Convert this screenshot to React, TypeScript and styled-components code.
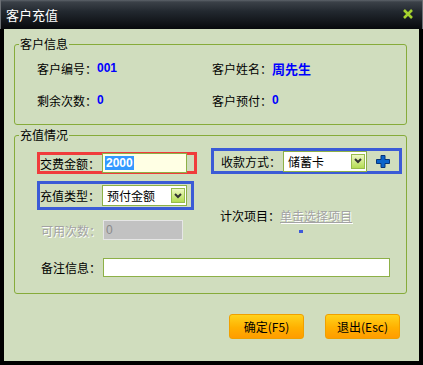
import styled, { createGlobalStyle } from "styled-components";

const GlobalStyle = createGlobalStyle`
  html, body {
    margin: 0;
    padding: 0;
    background: #000;
  }
  body {
    font-family: "Noto Sans CJK SC", "Noto Sans", sans-serif;
    font-size: 12px;
    color: #000;
  }
`;

const Window = styled.div`
  width: 423px;
  height: 365px;
  background: #000;
  display: flex;
  flex-direction: column;
`;

const TitleBar = styled.div`
  flex: none;
  height: 29px;
  box-sizing: border-box;
  display: flex;
  align-items: center;
  justify-content: space-between;
  padding: 0 9px 1px 5px;
  background: linear-gradient(#5d636a 0, #3b4148 2px, #22282f 40%, #07090c 100%);
  border-left: 1px solid #6b6f74;
  border-right: 1px solid #6b6f74;
  color: #fff;
  font-size: 13px;
`;

const Body = styled.div`
  flex: 1;
  margin: 0 4px 4px;
  padding: 8px 12px 0 10px;
  background: #d0ddbe;
  display: flex;
  flex-direction: column;
`;

const Group = styled.fieldset`
  margin: 0;
  padding: 0;
  min-width: 0;
  border: 1px solid #86ab3a;
  border-radius: 3px;
  & + & {
    margin-top: 3px;
  }
`;

const Legend = styled.legend`
  margin-left: 4px;
  padding: 0 1px;
  line-height: 14px;
  font-size: 12px;
`;

const InfoGrid = styled.div`
  display: grid;
  grid-template-columns: 175px 1fr;
  grid-auto-rows: 32px;
  align-items: center;
  padding: 1px 0 8px 22px;
`;

const InfoItem = styled.div`
  display: flex;
  align-items: center;
  white-space: nowrap;
`;

const Value = styled.span<{ $big?: boolean }>`
  color: #0000ff;
  font-weight: bold;
  font-family: ${(p) => (p.$big ? '"Noto Sans CJK SC", sans-serif' : '"Liberation Sans", sans-serif')};
  font-size: ${(p) => (p.$big ? 13 : 12)}px;
`;

const ChargeGrid = styled.div`
  display: grid;
  grid-template-columns: 174px 1fr;
  align-items: start;
  padding: 6px 0 0 22px;
`;

const Column = styled.div<{ $top?: number }>`
  display: flex;
  flex-direction: column;
  align-items: flex-start;
  padding-top: ${(p) => p.$top ?? 0}px;
`;

const Mark = styled.div<{ $color: string; $w: number; $h: number; $gap?: number; $pad?: number }>`
  box-sizing: border-box;
  display: flex;
  align-items: center;
  width: ${(p) => p.$w}px;
  height: ${(p) => p.$h}px;
  margin-top: ${(p) => p.$gap ?? 0}px;
  padding-left: ${(p) => p.$pad ?? 0}px;
  border: 3px solid ${(p) => p.$color};
`;

const Row = styled.div<{ $gap?: number; $pad?: number }>`
  display: flex;
  align-items: center;
  margin-top: ${(p) => p.$gap ?? 0}px;
  padding-left: ${(p) => p.$pad ?? 0}px;
`;

const Label = styled.span<{ $disabled?: boolean; $w?: number }>`
  flex: none;
  width: ${(p) => p.$w ?? 62}px;
  white-space: nowrap;
  color: ${(p) => (p.$disabled ? "#a3a3a3" : "#000")};
  text-shadow: ${(p) => (p.$disabled ? "1px 1px 0 #fff" : "none")};
`;

const Field = styled.div<{ $w: number; $h?: number; $bg?: string; $disabled?: boolean }>`
  flex: none;
  box-sizing: border-box;
  width: ${(p) => p.$w}px;
  height: ${(p) => p.$h ?? 20}px;
  display: flex;
  align-items: center;
  padding-left: 2px;
  border: 1px solid ${(p) => (p.$disabled ? "#e6e6e6" : "#8db047")};
  background: ${(p) => (p.$disabled ? "#c2c2c2" : p.$bg ?? "#fff")};
  color: ${(p) => (p.$disabled ? "#8a8a8a" : "#000")};
  font-family: "Liberation Sans", "Noto Sans CJK SC", sans-serif;
  white-space: nowrap;
`;

const Selected = styled.span`
  background: #3399ff;
  color: #fff;
  font-weight: bold;
  padding: 0 1px;
  line-height: 14px;
`;

const SelectText = styled.span`
  padding-left: 2px;
  font-family: "Noto Sans CJK SC", sans-serif;
`;

const DropButton = styled.span`
  margin-left: auto;
  margin-right: 1px;
  width: 14px;
  height: 15px;
  box-sizing: border-box;
  border: 1px solid #97bb4c;
  background: linear-gradient(#eef8c4, #b4dc52);
  display: flex;
  align-items: center;
  justify-content: center;
`;

const AddIcon = styled.svg`
  margin-left: 9px;
  flex: none;
`;

const Link = styled.span`
  color: #a3a3a3;
  text-decoration: underline;
  text-shadow: 1px 1px 0 #fff;
  white-space: nowrap;
`;

const Dot = styled.span`
  width: 4px;
  height: 3px;
  margin: 6px 0 0 88px;
  background: #3d59d9;
`;

const RemarkRow = styled(Row)`
  padding-bottom: 16px;
`;

const Buttons = styled.div`
  display: flex;
  justify-content: flex-end;
  gap: 21px;
  margin-top: 20px;
  padding-right: 7px;
`;

const Button = styled.button`
  width: 75px;
  height: 25px;
  padding: 0;
  border: 1px solid #f0a000;
  border-radius: 3px;
  background: linear-gradient(#ffd21c, #ffb000 55%, #ff9c00);
  font-family: "Noto Sans CJK SC", sans-serif;
  font-size: 12px;
  color: #000;
`;

const Chevron = () => (
  <svg width="8" height="6" viewBox="0 0 8 6">
    <path d="M1 1 L4 4 L7 1" fill="none" stroke="#333" strokeWidth="2" />
  </svg>
);

const Select = ({ w, text }: { w: number; text: string }) => (
  <Field $w={w} $h={21}>
    <SelectText>{text}</SelectText>
    <DropButton>
      <Chevron />
    </DropButton>
  </Field>
);

export default function App() {
  return (
    <>
      <GlobalStyle />
      <Window>
        <TitleBar>
          <span>客户充值</span>
          <svg width="10" height="10" viewBox="0 0 10 10">
            <path d="M1 1 L9 9 M9 1 L1 9" stroke="#a6d22e" strokeWidth="2.6" />
          </svg>
        </TitleBar>
        <Body>
          <Group>
            <Legend>客户信息</Legend>
            <InfoGrid>
              <InfoItem>
                客户编号：<Value>001</Value>
              </InfoItem>
              <InfoItem>
                客户姓名：<Value $big>周先生</Value>
              </InfoItem>
              <InfoItem>
                剩余次数：<Value>0</Value>
              </InfoItem>
              <InfoItem>
                客户预付：<Value>0</Value>
              </InfoItem>
            </InfoGrid>
          </Group>

          <Group>
            <Legend>充值情况</Legend>
            <ChargeGrid>
              <Column $top={4}>
                <Mark $color="#f03c3c" $w={160} $h={22}>
                  <Label>交费金额：</Label>
                  <Field $w={85} $bg="#ffffe4">
                    <Selected>2000</Selected>
                  </Field>
                </Mark>
                <Mark $color="#3b5bd6" $w={157} $h={29} $gap={7}>
                  <Label>充值类型：</Label>
                  <Select w={85} text="预付金额" />
                </Mark>
                <Row $gap={10} $pad={4}>
                  <Label $disabled>可用次数：</Label>
                  <Field $w={80} $disabled>
                    0
                  </Field>
                </Row>
              </Column>
              <Column>
                <Mark $color="#3b5bd6" $w={191} $h={26} $pad={7}>
                  <Label>收款方式：</Label>
                  <Select w={84} text="储蓄卡" />
                  <AddIcon width="14" height="13" viewBox="0 0 14 13">
                    <path
                      d="M5 0.5 H9 V4.5 H13.5 V8.5 H9 V12.5 H5 V8.5 H0.5 V4.5 H5 Z"
                      fill="#0a64cc"
                      stroke="#06357a"
                    />
                  </AddIcon>
                </Mark>
                <Row $gap={33} $pad={9}>
                  <Label $w={60}>计次项目：</Label>
                  <Link>单击选择项目</Link>
                </Row>
                <Dot />
              </Column>
            </ChargeGrid>
            <RemarkRow $gap={18} $pad={26}>
              <Label>备注信息：</Label>
              <Field $w={287} $h={19} />
            </RemarkRow>
          </Group>

          <Buttons>
            <Button>确定(F5)</Button>
            <Button>退出(Esc)</Button>
          </Buttons>
        </Body>
      </Window>
    </>
  );
}
